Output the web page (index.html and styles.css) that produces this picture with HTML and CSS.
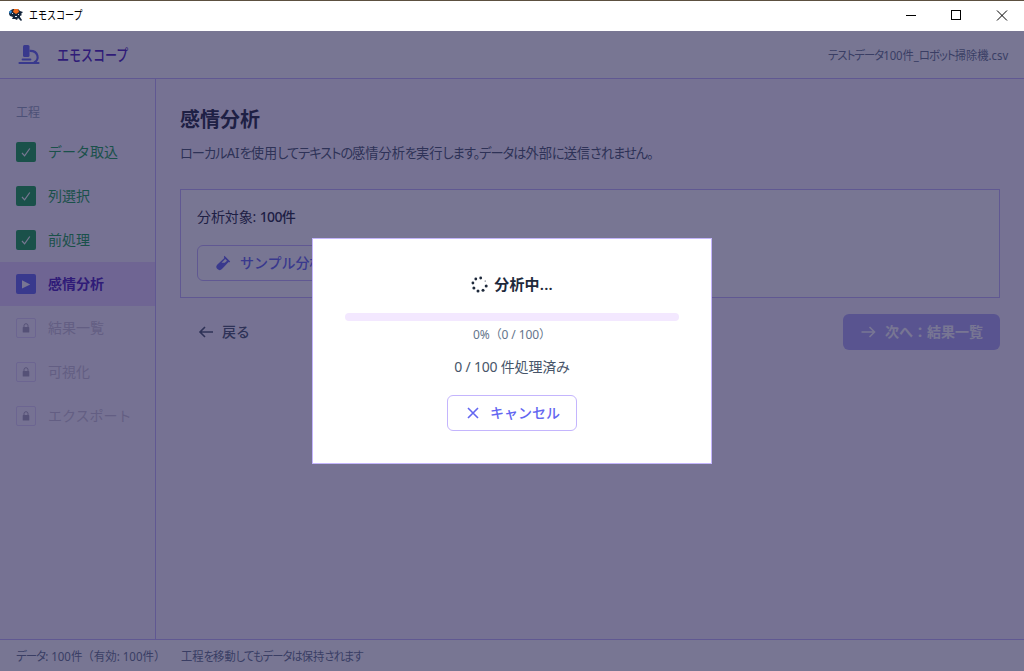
FILE: index.html
```html
<!DOCTYPE html>
<html lang="ja">

<head>
    <meta charset="UTF-8">
    <meta name="viewport" content="width=device-width, initial-scale=1.0">
    <title>エモスコープ</title>
    <link rel="stylesheet" href="styles.css">
</head>

<body>
    <div class="titlebar">
        <svg class="app-icon" width="14" height="14" viewBox="0 0 14 14">
            <path d="M0 4l2-2 2-1h5l2 2 3 1-2 2 1 1-2 1 0 1 2 3-1 1-3-3-1 2-2-1-3 0 1-2-3-1-1-2z" fill="#14263d" />
            <path d="M5 1h4l1 3-3 2-3-2z" fill="#f26a1b" />
            <path d="M0 4l2-2 1 2-2 2z" fill="#2b8fe0" />
            <path d="M6 8h2v1H6zM3 5h1v1H3zM9 6h1v1H9z" fill="#dce8f2" />
        </svg>
        <span class="window-title"><span class="condensed">エモスコープ</span></span>
        <svg class="window-buttons" width="138" height="30" viewBox="0 0 138 30" fill="none" stroke="#000" shape-rendering="crispEdges">
            <path d="M19 14.5h10M64.5 9.5h9v9h-9z" />
            <path d="M110 9.5l10 10M120 9.5l-10 10" shape-rendering="auto" />
        </svg>
    </div>

    <div class="app">
        <header class="header">
            <svg width="22" height="22" viewBox="0 0 22 22" fill="none" stroke="#6366f1">
                <path d="M5 2.5q0-1.5 1.5-1.5h3.500q1.500 0 1.500 1.500v9q0 1.500-1.500 1.500h-3.500Q5 13 5 11.500z" fill="#6366f1" stroke="none" />
                <path d="M11.500 6.800c9-.5 10.500 9 4.500 11.700" stroke-width="2.200" />
                <path d="M4.500 15.500h8" stroke-width="1.800" stroke-linecap="round" />
                <path d="M1.500 19h19" stroke-width="2.200" stroke-linecap="round" />
            </svg>
            <h1><span class="condensed">エモスコープ</span></h1>
            <span class="file-name narrow"><span class="kana">テストデータ</span>100件_<span class="kana">ロボット</span>掃除機.csv</span>
        </header>

        <div class="body">
            <nav class="sidebar">
                <p class="sidebar-label">工程</p>
                <ul>
                    <li class="step done">
                        <span class="step-icon"><svg width="10" height="10" viewBox="0 0 10 10"><path d="M1 6l2.6 2.8L8.8 1.5" /></svg></span>
                        <span class="step-name">データ取込</span>
                    </li>
                    <li class="step done">
                        <span class="step-icon"><svg width="10" height="10" viewBox="0 0 10 10"><path d="M1 6l2.6 2.8L8.8 1.5" /></svg></span>
                        <span class="step-name">列選択</span>
                    </li>
                    <li class="step done">
                        <span class="step-icon"><svg width="10" height="10" viewBox="0 0 10 10"><path d="M1 6l2.6 2.8L8.8 1.5" /></svg></span>
                        <span class="step-name">前処理</span>
                    </li>
                    <li class="step active">
                        <span class="step-icon"><svg width="10" height="10" viewBox="0 0 10 10"><path d="M1 1.2l8.2 4.2L1 9.6z" /></svg></span>
                        <span class="step-name">感情分析</span>
                    </li>
                    <li class="step locked">
                        <span class="step-icon"><svg width="8" height="10" viewBox="0 0 8 10"><path class="shackle" d="M2 5V2.7a2 2 0 0 1 4 0V5" /><rect x=".7" y="4" width="6.6" height="5.6" rx=".7" /></svg></span>
                        <span class="step-name">結果一覧</span>
                    </li>
                    <li class="step locked">
                        <span class="step-icon"><svg width="8" height="10" viewBox="0 0 8 10"><path class="shackle" d="M2 5V2.7a2 2 0 0 1 4 0V5" /><rect x=".7" y="4" width="6.6" height="5.6" rx=".7" /></svg></span>
                        <span class="step-name">可視化</span>
                    </li>
                    <li class="step locked">
                        <span class="step-icon"><svg width="8" height="10" viewBox="0 0 8 10"><path class="shackle" d="M2 5V2.7a2 2 0 0 1 4 0V5" /><rect x=".7" y="4" width="6.6" height="5.6" rx=".7" /></svg></span>
                        <span class="step-name">エクスポート</span>
                    </li>
                </ul>
            </nav>

            <main class="main">
                <h2>感情分析</h2>
                <p class="description"><span class="narrow"><span class="kana">ローカル</span>AI<span class="kana">を</span>使用<span class="kana">してテキストの</span>感情分析<span class="kana">を</span>実行<span class="kana">します。データは</span>外部<span class="kana">に</span>送信<span class="kana">されません。</span></span></p>

                <section class="card">
                    <p class="target">分析対象: <strong>100件</strong></p>
                    <button class="btn btn-outline">
                        <svg width="16" height="16" viewBox="0 0 16 16">
                            <path d="M9.5.8l5.700 5.700-1 1-.6-.4-6.600 7a3.200 3.200 0 0 1-4.600-4.600l7-6.600-.6-.8z" fill="#6366f1" />
                            <path d="M10.200 4l1.800 1.800-2.200 2H6.500z" fill="#fff" />
                        </svg>
                        サンプル分析
                    </button>
                </section>

                <div class="actions">
                    <button class="btn btn-text">
                        <svg width="16" height="16" viewBox="0 0 16 16"><path d="M15 8H2M7 3L2 8l5 5" /></svg>
                        戻る
                    </button>
                    <button class="btn btn-primary" disabled>
                        <svg width="16" height="16" viewBox="0 0 16 16"><path d="M1.500 8h13M9.500 3l5 5-5 5" /></svg>
                        次へ：結果一覧
                    </button>
                </div>
            </main>
        </div>

        <footer class="footer">
            <span class="status-data"><span class="narrow"><span class="kana">データ</span>: 100件（有効: 100件）</span></span>
            <span class="status-note narrow">工程<span class="kana">を</span>移動<span class="kana">してもデータは</span>保持<span class="kana">されます</span></span>
        </footer>

        <div class="overlay">
            <div class="modal" role="dialog">
                <h3>
                    <svg width="18" height="18" viewBox="0 0 18 18" fill="#1e293b">
                        <circle cx="9.7" cy="2" r="1.4" />
                        <circle cx="4.8" cy="3" r="1.4" />
                        <circle cx="1.9" cy="7" r="1.4" />
                        <circle cx="2.9" cy="12" r="1.5" />
                        <circle cx="7" cy="15" r="1.5" />
                        <circle cx="12" cy="14.2" r="1.5" />
                        <circle cx="15.2" cy="10" r="1.5" />
                        <circle cx="14.2" cy="5" r=".6" />
                    </svg>
                    分析中...
                </h3>
                <div class="progress"></div>
                <p class="percent">0%（0 / 100）</p>
                <p class="count">0 / 100 件処理済み</p>
                <button class="btn btn-outline btn-cancel">
                    <svg width="16" height="16" viewBox="0 0 16 16"><path d="M3 3l10 10M13 3L3 13" /></svg>
                    キャンセル
                </button>
            </div>
        </div>
    </div>
</body>

</html>
```
FILE: styles.css
```css
* {
    margin: 0;
    padding: 0;
    box-sizing: border-box;
}

body {
    height: 100vh;
    display: flex;
    flex-direction: column;
    font-family: 'Noto Sans', 'Noto Sans CJK JP', sans-serif;
    font-size: 14px;
    color: #1e293b;
    overflow: hidden;
}

svg {
    flex-shrink: 0;
}

/* Window frame */
.titlebar {
    height: 31px;
    border-top: 1px solid #5c5040;
    background-color: #fff;
    display: flex;
    align-items: center;
    padding-left: 9px;
}

.app-icon {
    margin: 0 6px 2px 0;
}

.window-title {
    padding-bottom: 2px;
    font-size: 12px;
    color: #000;
    flex: 1;
}

.window-buttons {
    margin-right: -1px;
}

/* Narrow kana for titles */
.condensed {
    display: inline-block;
    transform: scaleX(0.75);
    transform-origin: left;
}

/* Narrow kana inside running text */
.narrow {
    display: inline-block;
    transform: scaleX(0.942);
    transform-origin: left;
}

.kana {
    font-feature-settings: 'palt';
    letter-spacing: -1px;
}

.app {
    flex: 1;
    min-height: 0;
    position: relative;
    display: flex;
    flex-direction: column;
    background-color: #faf5ff;
}

.header {
    height: 48px;
    border-bottom: 1px solid #c4b5fd;
    background-color: #fff;
    display: flex;
    align-items: center;
    padding: 0 16px 0 18px;
}

.header h1 {
    flex: 1;
    margin-left: 17px;
    padding-bottom: 2px;
    font-size: 16px;
    font-weight: 500;
    color: #4c1dbb;
}

.file-name {
    font-size: 12px;
    color: #64748b;
    transform-origin: right;
}

.body {
    flex: 1;
    min-height: 0;
    display: flex;
}

.sidebar {
    width: 156px;
    border-right: 1px solid #c4b5fd;
    padding-top: 25px;
}

.sidebar-label {
    height: 26px;
    padding-left: 16px;
    font-size: 12px;
    line-height: 18px;
    color: #94a3b8;
}

.sidebar ul {
    list-style: none;
}

.step {
    height: 44px;
    display: flex;
    align-items: center;
    gap: 12px;
    padding: 0 16px;
    white-space: nowrap;
}

.step-name {
    padding-bottom: 2px;
}

.step-icon {
    width: 20px;
    height: 20px;
    border-radius: 2px;
    display: flex;
    align-items: center;
    justify-content: center;
}

.done {
    color: #16a34a;
}

.done .step-icon {
    background-color: #16a34a;
}

.done path {
    fill: none;
    stroke: #fff;
    stroke-width: 1.2;
}

.active {
    background-color: #e9d5ff;
    color: #4c1dbb;
    font-weight: 700;
}

.active .step-icon {
    background-color: #6366f1;
}

.active path {
    fill: #fff;
}

.locked {
    color: #cbc4d6;
}

.locked .step-icon {
    border: 1px solid #e0d4fa;
}

.locked rect {
    fill: #a9a3b8;
}

.locked .shackle {
    fill: none;
    stroke: #a9a3b8;
}

.main {
    flex: 1;
    padding: 24px;
}

.main h2 {
    font-size: 20px;
    font-weight: 600;
    line-height: 34px;
}

.description {
    height: 52px;
    line-height: 32px;
    color: #475569;
    white-space: nowrap;
}

.card {
    height: 109px;
    border: 1px solid #c4b5fd;
    background-color: #fff;
    padding: 16px;
}

.target {
    height: 39px;
    line-height: 21px;
    letter-spacing: -0.1px;
}

.target strong {
    font-weight: 500;
    letter-spacing: -0.7px;
}

.btn {
    height: 36px;
    border: 1px solid transparent;
    border-radius: 6px;
    padding: 0 16px 2px;
    display: flex;
    align-items: center;
    gap: 9px;
    background: none;
    font-family: 'Noto Sans CJK JP', sans-serif;
    font-size: 14px;
    font-weight: 500;
    white-space: nowrap;
}

.btn svg {
    margin-top: 1px;
}

.btn path {
    stroke-width: 1.6;
}

.btn-outline {
    border-color: #c4b5fd;
    background-color: #fff;
    color: #6366f1;
}

.btn-outline svg {
    margin-left: 1px;
}

.actions {
    display: flex;
    justify-content: space-between;
    margin-top: 16px;
}

.btn-text {
    gap: 8px;
    color: #475569;
}

.btn-text path {
    fill: none;
    stroke: #475569;
}

.btn-text svg {
    margin-left: 1px;
}

.btn-primary {
    background-color: #b1aaf8;
    color: #fff;
    font-weight: 700;
}

.btn-primary path {
    fill: none;
    stroke: #fff;
}

.footer {
    height: 32px;
    border-top: 1px solid #c4b5fd;
    background-color: #fff;
    display: flex;
    align-items: center;
    gap: 16px;
    padding: 0 16px;
    font-size: 12px;
    color: #64748b;
}

.status-data {
    width: 149px;
    white-space: nowrap;
}

.status-data .narrow {
    transform: scaleX(0.955);
}

/* Progress dialog */
.overlay {
    position: absolute;
    inset: 0;
    background-color: rgba(30, 27, 75, 0.6);
    display: flex;
    align-items: center;
    justify-content: center;
}

.modal {
    width: 400px;
    height: 226px;
    border: 1px solid #c4b5fd;
    background-color: #fff;
    padding: 32px;
    display: flex;
    flex-direction: column;
    align-items: center;
}

.modal h3 {
    height: 42px;
    display: flex;
    align-items: flex-start;
    gap: 5px;
    font-size: 15px;
    font-weight: 600;
    line-height: 26px;
    letter-spacing: 0.2px;
}

.modal h3 svg {
    margin-top: 5px;
}

.progress {
    width: 100%;
    height: 8px;
    border-radius: 4px;
    background-color: #f3e8ff;
}

.percent {
    margin-top: 5px;
    font-size: 12px;
    line-height: 18px;
    letter-spacing: -0.1px;
    color: #64748b;
}

.count {
    height: 40px;
    margin-top: 11px;
    line-height: 23px;
    letter-spacing: -0.2px;
    color: #475569;
}

.btn-cancel path {
    stroke: #6366f1;
}
```
